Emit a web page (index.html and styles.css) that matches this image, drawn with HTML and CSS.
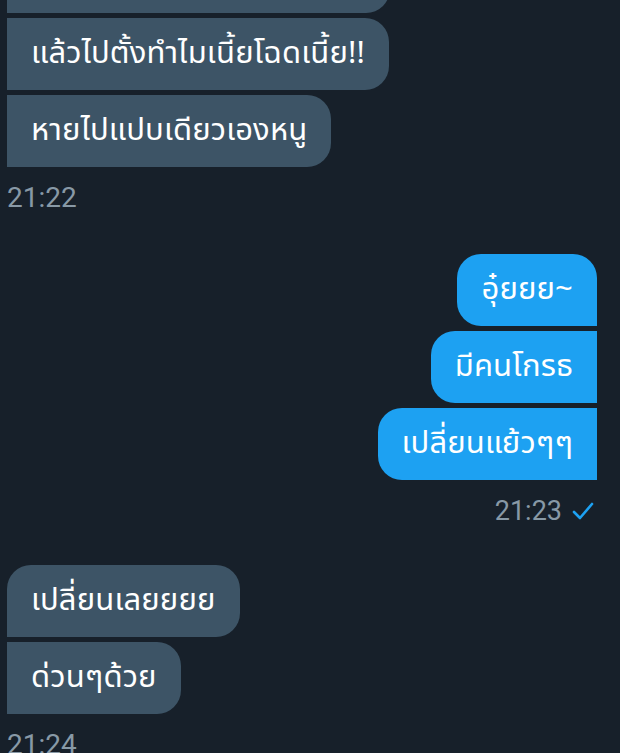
FILE: index.html
```html
<!DOCTYPE html>
<html lang="th">
<head>
<meta charset="utf-8">
<link rel="stylesheet" href="styles.css">
</head>
<body>
<div class="chat">
  <div class="group in first-cut">
    <div class="bubble in cut"></div>
    <div class="bubble in">แล้วไปตั้งทำไมเนี้ยโฉดเนี้ย!!</div>
    <div class="bubble in last">หายไปแปบเดียวเองหนู</div>
    <div class="time">21:22</div>
  </div>
  <div class="group out">
    <div class="bubble out first">อุ๋ยยย~</div>
    <div class="bubble out">มีคนโกรธ</div>
    <div class="bubble out last">เปลี่ยนแย้วๆๆ</div>
    <div class="time out-time">21:23
      <svg class="check" width="22" height="18" viewBox="0 0 22 18"><path d="M2 10 L8 16 L20 2" fill="none" stroke="#1da1f2" stroke-width="2.6" stroke-linecap="round" stroke-linejoin="round"/></svg>
    </div>
  </div>
  <div class="group in">
    <div class="bubble in first">เปลี่ยนเลยยยย</div>
    <div class="bubble in last">ด่วนๆด้วย</div>
    <div class="time">21:24</div>
  </div>
</div>
</body>
</html>
```
FILE: styles.css
```css
html, body {
  margin: 0;
  padding: 0;
  background: #17202a;
  height: 100%;
  overflow: hidden;
}
.chat {
  display: flex;
  flex-direction: column;
  padding: 0 23px 0 7px;
  margin-top: -59px;
  font-family: "Noto Sans Thai", "Noto Sans", "DejaVu Sans", sans-serif;
}
.group {
  display: flex;
  flex-direction: column;
  gap: 5px;
  align-items: flex-start;
}
.group.out {
  align-items: flex-end;
  margin-top: 41px;
}
.group.in + .group.in, .group.out + .group.in {
  margin-top: 39px;
}
.bubble {
  color: #ffffff;
  font-size: 31px;
  line-height: 36px;
  height: 72px;
  box-sizing: border-box;
  padding: 18px 24px;
  white-space: nowrap;
  letter-spacing: 0.15px;
}
.bubble.in {
  background: #3d5466;
  border-radius: 0 24px 24px 0;
}
.bubble.in.first {
  border-radius: 24px 24px 24px 0;
}
.bubble.out {
  background: #1da1f2;
  border-radius: 24px 0 0 24px;
}
.bubble.out.first {
  border-radius: 24px 24px 0 24px;
}
.bubble.cut {
  width: 383px;
}
.time {
  color: #8899a6;
  font-family: "Roboto", "Liberation Sans", sans-serif;
  font-size: 28px;
  line-height: 30px;
  margin-top: 11px;
}
.out-time {
  display: flex;
  align-items: center;
  gap: 10px;
  margin-right: 3px;
  font-size: 27px;
}
.check {
  display: block;
}
```
